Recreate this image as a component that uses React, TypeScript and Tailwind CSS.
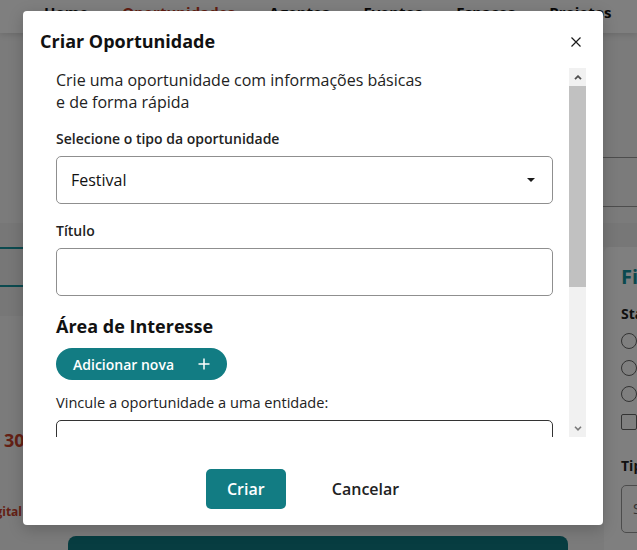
import React from 'react';

const navItems = ['Home', 'Oportunidades', 'Agentes', 'Eventos', 'Espaços', 'Projetos'];

function BackgroundPage() {
    return (
        <div className="flex h-full w-full flex-col bg-[#f6f6f6]">
            <header className="relative flex h-[33px] shrink-0 items-start gap-[34px] bg-white pl-[44px] pt-[2px] text-[15px] font-bold leading-[20px] text-[#111] shadow-[0_2px_6px_rgba(0,0,0,0.12)]">
                {navItems.map((item) => (
                    <span key={item} className={item === 'Oportunidades' ? 'text-[#c63a22]' : ''}>
                        {item}
                    </span>
                ))}
            </header>

            <div className="flex h-[190px] shrink-0 justify-end pt-[124px]">
                <div className="h-[50px] w-[320px] border-y border-[#9a9a9a]" />
            </div>

            <div className="flex flex-1">
                <div className="flex w-[590px] shrink-0 flex-col">
                    <div className="h-[93px] bg-[#eeeeee] pt-[24px]">
                        <div className="h-[40px] border-y-2 border-[#17949e]" />
                    </div>
                    <div className="mt-[112px] pl-[4px] text-[18px] font-bold leading-[24px] text-[#c8412a]">30,00</div>
                    <div className="mt-[52px] flex w-[22px] justify-end overflow-hidden text-[12px] font-bold leading-[16px] text-[#c8412a]">
                        <span className="shrink-0">Digital</span>
                    </div>
                    <div className="ml-[68px] mt-[16px] flex h-[40px] w-[500px] items-center justify-end rounded-t-lg bg-[#0f7a82] pr-[24px] text-[20px] text-white">
                        ›
                    </div>
                </div>

                <aside className="flex flex-1 flex-col overflow-hidden">
                    <div className="h-[24px] shrink-0 bg-[#eeeeee]" />
                    <div className="ml-[14px] w-[300px] flex-1 rounded-tl-[6px] bg-white px-[17px] pt-[16px] text-[#222]">
                        <div className="text-[20px] font-bold leading-[28px] text-[#17939e]">Filtros</div>
                        <div className="mt-[13px] text-[14px] font-bold leading-[20px]">Status</div>
                        <div className="mt-[4px] flex flex-col">
                            {['Inscrições abertas', 'Inscrições encerradas', 'Inscrições futuras'].map((t) => (
                                <div key={t} className="flex h-[26.5px] items-center gap-2 text-[14px]">
                                    <span className="h-[16px] w-[16px] rounded-full border-[1.5px] border-[#666]" />
                                    {t}
                                </div>
                            ))}
                            <div className="flex h-[28px] items-center gap-2 text-[14px]">
                                <span className="h-[16px] w-[16px] rounded-[2px] border-[1.5px] border-[#666]" />
                                Editais oficiais
                            </div>
                        </div>
                        <div className="mt-[20px] text-[14px] font-bold leading-[20px]">Tipo de oportunidade</div>
                        <div className="mt-[9px] flex h-[48px] items-center rounded-[5px] border border-[#999] pl-[11px] text-[14px] text-[#666]">
                            Selecione
                        </div>
                    </div>
                </aside>
            </div>
        </div>
    );
}

function FakeScrollbar() {
    return (
        <div className="flex w-[17px] shrink-0 flex-col bg-[#f1f1f1]">
            <div className="flex h-[18px] items-center justify-center">
                <svg width="8" height="5" viewBox="0 0 8 5">
                    <polyline points="1,4.2 4,1.2 7,4.2" fill="none" stroke="#505050" strokeWidth="1.8" />
                </svg>
            </div>
            <div className="h-[201px] bg-[#c1c1c1]" />
            <div className="flex-1" />
            <div className="flex h-[17px] items-center justify-center">
                <svg width="8" height="5" viewBox="0 0 8 5">
                    <polyline points="1,0.8 4,3.8 7,0.8" fill="none" stroke="#7a7a7a" strokeWidth="1.6" />
                </svg>
            </div>
        </div>
    );
}

function CreateOpportunityModal() {
    return (
        <div className="flex h-[514px] w-[580px] flex-col rounded-[4px] bg-white shadow-[0_4px_16px_rgba(0,0,0,0.2)]">
            <div className="flex h-[57px] shrink-0 items-start justify-between pl-[17px] pr-[22px] pt-[18px]">
                <h2 className="text-[18px] font-bold leading-[24px] text-[#111]">Criar Oportunidade</h2>
                <button className="mt-[8px] flex h-[10px] w-[10px] items-center justify-center">
                    <svg width="10" height="10" viewBox="0 0 10 10">
                        <path d="M0.5 0.5 L9.5 9.5 M9.5 0.5 L0.5 9.5" stroke="#1a1a1a" strokeWidth="1.2" />
                    </svg>
                </button>
            </div>

            <div className="mx-[17px] flex h-[369px] shrink-0">
                <div className="flex flex-1 flex-col overflow-hidden px-4 text-[#222]">
                    <p className="pt-[1px] text-[16px] leading-[22px] text-[#222]">
                        Crie uma oportunidade com informações básicas
                        <br />e de forma rápida
                    </p>

                    <label className="mt-[16px] text-[14px] font-semibold leading-[20px]">Selecione o tipo da oportunidade</label>
                    <div className="mt-[7px] flex h-[48px] shrink-0 items-center justify-between rounded-[5px] border border-[#8f8f8f] pl-[14px] pr-[17px]">
                        <span className="text-[16px] text-[#111]">Festival</span>
                        <svg width="8" height="4" viewBox="0 0 8 4">
                            <polygon points="0,0 8,0 4,4" fill="#1a1a1a" />
                        </svg>
                    </div>

                    <label className="mt-[17px] text-[14px] font-semibold leading-[20px]">Título</label>
                    <div className="mt-[7px] h-[48px] shrink-0 rounded-[5px] border border-[#8f8f8f]" />

                    <h3 className="mt-[18px] text-[18px] font-bold leading-[24px] text-[#111]">Área de Interesse</h3>
                    <button className="mt-[10px] flex h-[32px] w-[171px] shrink-0 items-center gap-[24px] rounded-full bg-[#127c83] pl-[17px] text-[14px] font-semibold text-white">
                        Adicionar nova
                        <svg width="12" height="12" viewBox="0 0 12 12">
                            <path d="M6 0.5 V11.5 M0.5 6 H11.5" stroke="white" strokeWidth="1.5" />
                        </svg>
                    </button>

                    <label className="mt-[12px] text-[14.6px] leading-[20px]">Vincule a oportunidade a uma entidade:</label>
                    <div className="mt-[8px] h-[48px] shrink-0 rounded-[5px] border border-[#333]" />
                </div>
                <FakeScrollbar />
            </div>

            <div className="flex flex-1 items-start justify-center pt-[32px]">
                <button className="ml-[1px] h-[40px] w-[80px] rounded-[5px] bg-[#127c83] text-[16px] font-semibold text-white">Criar</button>
                <button className="ml-[24px] h-[40px] px-[22px] text-[16px] font-semibold text-[#222]">Cancelar</button>
            </div>
        </div>
    );
}

export default function App() {
    return (
        <div className="relative h-[550px] w-[637px] overflow-hidden font-['Open_Sans',sans-serif]">
            <BackgroundPage />
            <div className="absolute inset-0 z-20 bg-black/50 pl-[23px] pt-[11px]">
                <CreateOpportunityModal />
            </div>
        </div>
    );
}
